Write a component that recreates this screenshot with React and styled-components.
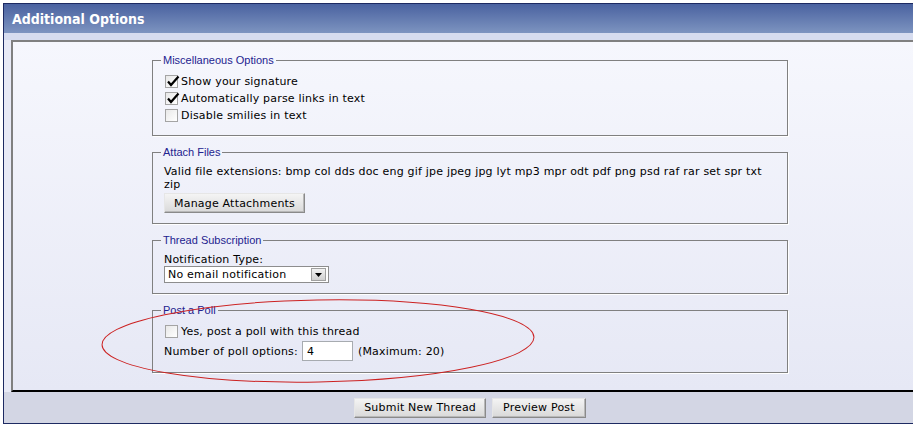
import React, { useState } from "react";
import styled, { createGlobalStyle } from "styled-components";

const GlobalStyle = createGlobalStyle`
  html, body {
    margin: 0;
    padding: 0;
    overflow: hidden;
    background: #ffffff;
  }
  body {
    font-family: "DejaVu Sans", Verdana, sans-serif;
    font-size: 11px;
    letter-spacing: 0.2px;
    color: #000;
  }
`;

const Frame = styled.div`
  margin: 3px 0 0 3px;
  width: 932px;
  border: 1px solid #1d2a62;
  border-right: none;
  background: #e8eaf6;
`;

const Header = styled.div`
  height: 29px;
  padding-left: 8px;
  display: flex;
  align-items: center;
  background: linear-gradient(#4a62a0, #7d94c0);
  border-bottom: 7px solid #d6dcef;
  color: #fff;
  font-family: "DejaVu Sans Condensed", Tahoma, sans-serif;
  font-weight: bold;
  font-size: 14px;
  letter-spacing: 0;
`;

const Panel = styled.div`
  margin: 0 7px;
  border-top: 2px solid #808080;
  border-left: 2px solid #808080;
  border-bottom: 2px solid #000;
  background: linear-gradient(#f6f7fd, #e6e8f5);
  padding: 12px 0 7px;
`;

const Column = styled.div`
  width: 636px;
  margin: 0 0 0 139px;
`;

const Group = styled.fieldset`
  position: relative;
  margin: 0 0 10px;
  padding: 6px 12px ${(p) => p.$pb || 10}px 11px;
  border: 1px solid #808080;
  box-shadow: 1px 1px 0 #fff;
  min-width: 0;
`;

const Legend = styled.legend`
  margin-left: -3px;
  padding: 0 2px;
  font-family: "Liberation Sans", Tahoma, sans-serif;
  font-size: 11px;
  line-height: 13px;
  letter-spacing: 0;
  color: #23238f;
`;

const CheckRow = styled.label`
  display: flex;
  align-items: center;
  height: 17px;
  gap: 3px;
  cursor: default;
`;

const Box = styled.span`
  width: 11px;
  height: 11px;
  margin-left: 1px;
  border: 1px solid #a4a4a4;
  background: linear-gradient(135deg, #e8e8e8, #ffffff);
  position: relative;
  flex: none;
`;

const Tick = styled.svg`
  position: absolute;
  left: 0px;
  top: -2px;
`;

const Text = styled.div`
  line-height: 13px;
`;

const Btn = styled.button`
  font-family: "DejaVu Sans", Verdana, sans-serif;
  font-size: 11px;
  letter-spacing: 0.2px;
  height: 20px;
  padding: 0 ${(p) => p.$pad || 9}px;
  color: #000;
  background: linear-gradient(#f4f4f4, #d9d9d9);
  border: 1px solid;
  border-color: #e6e6e6 #8a8a8a #8a8a8a #e6e6e6;
  box-shadow: inset -1px -1px 0 #b8b8b8;
  white-space: nowrap;
`;

const AttachBtn = styled(Btn)`
  margin-top: 2px;
`;

const SelectBox = styled.div`
  display: flex;
  align-items: center;
  width: 163px;
  height: 15px;
  border: 1px solid #8d8d8d;
  background: #fff;
`;

const SelectText = styled.span`
  flex: 1;
  padding-left: 3px;
  line-height: 15px;
`;

const Arrow = styled.span`
  width: 13px;
  height: 11px;
  margin-right: 2px;
  display: flex;
  align-items: center;
  justify-content: center;
  background: linear-gradient(#f2f2f2, #d0d0d0);
  border: 1px solid #a0a0a0;
`;

const OptRow = styled.div`
  display: flex;
  align-items: center;
  height: 22px;
`;

const NumInput = styled.input`
  width: 45px;
  height: 18px;
  margin: 0 5px 0 4px;
  padding: 0 0 0 4px;
  border: 1px solid #a7abb0;
  background: #fff;
  font-family: "DejaVu Sans", Verdana, sans-serif;
  font-size: 11px;
  outline: none;
`;

const Circle = styled.svg`
  position: absolute;
  left: -60px;
  top: -23px;
  overflow: visible;
  pointer-events: none;
`;

const Footer = styled.div`
  background: #d3d6e4;
  height: 31px;
  display: flex;
  justify-content: center;
  align-items: center;
  gap: 6px;
`;

function Check({ checked, label, onToggle }) {
  return (
    <CheckRow onClick={onToggle}>
      <Box>
        {checked && (
          <Tick width="14" height="14" viewBox="0 0 14 14">
            <path d="M2 7.5 L5 11 L12.5 2.5" fill="none" stroke="#000" strokeWidth="2.2" />
          </Tick>
        )}
      </Box>
      <span>{label}</span>
    </CheckRow>
  );
}

export default function App() {
  const [opts, setOpts] = useState({ sig: true, links: true, smilies: false, poll: false });
  const [count, setCount] = useState("4");
  const flip = (k) => setOpts((o) => ({ ...o, [k]: !o[k] }));

  return (
    <>
      <GlobalStyle />
      <Frame>
        <Header>Additional Options</Header>
        <Panel>
          <Column>
            <Group $pb={11}>
              <Legend>Miscellaneous Options</Legend>
              <Check checked={opts.sig} label="Show your signature" onToggle={() => flip("sig")} />
              <Check checked={opts.links} label="Automatically parse links in text" onToggle={() => flip("links")} />
              <Check checked={opts.smilies} label="Disable smilies in text" onToggle={() => flip("smilies")} />
            </Group>

            <Group>
              <Legend>Attach Files</Legend>
              <Text>
                Valid file extensions: bmp col dds doc eng gif jpe jpeg jpg lyt mp3 mpr odt pdf png psd raf rar set spr txt zip
              </Text>
              <AttachBtn type="button">Manage Attachments</AttachBtn>
            </Group>

            <Group>
              <Legend>Thread Subscription</Legend>
              <Text>Notification Type:</Text>
              <SelectBox>
                <SelectText>No email notification</SelectText>
                <Arrow>
                  <svg width="7" height="4" viewBox="0 0 7 4">
                    <path d="M0 0 H7 L3.5 4 Z" fill="#000" />
                  </svg>
                </Arrow>
              </SelectBox>
            </Group>

            <Group>
              <Legend>Post a Poll</Legend>
              <Check checked={opts.poll} label="Yes, post a poll with this thread" onToggle={() => flip("poll")} />
              <OptRow>
                Number of poll options:
                <NumInput value={count} onChange={(e) => setCount(e.target.value)} />
                (Maximum: 20)
              </OptRow>
              <Circle width="450" height="100">
                <ellipse cx="225" cy="47" rx="216" ry="41" fill="none" stroke="#cc2222" strokeWidth="1" transform="rotate(-1 225 47)" />
              </Circle>
            </Group>
          </Column>
        </Panel>
        <Footer>
          <Btn type="button">Submit New Thread</Btn>
          <Btn type="button" $pad={10}>Preview Post</Btn>
        </Footer>
      </Frame>
    </>
  );
}
